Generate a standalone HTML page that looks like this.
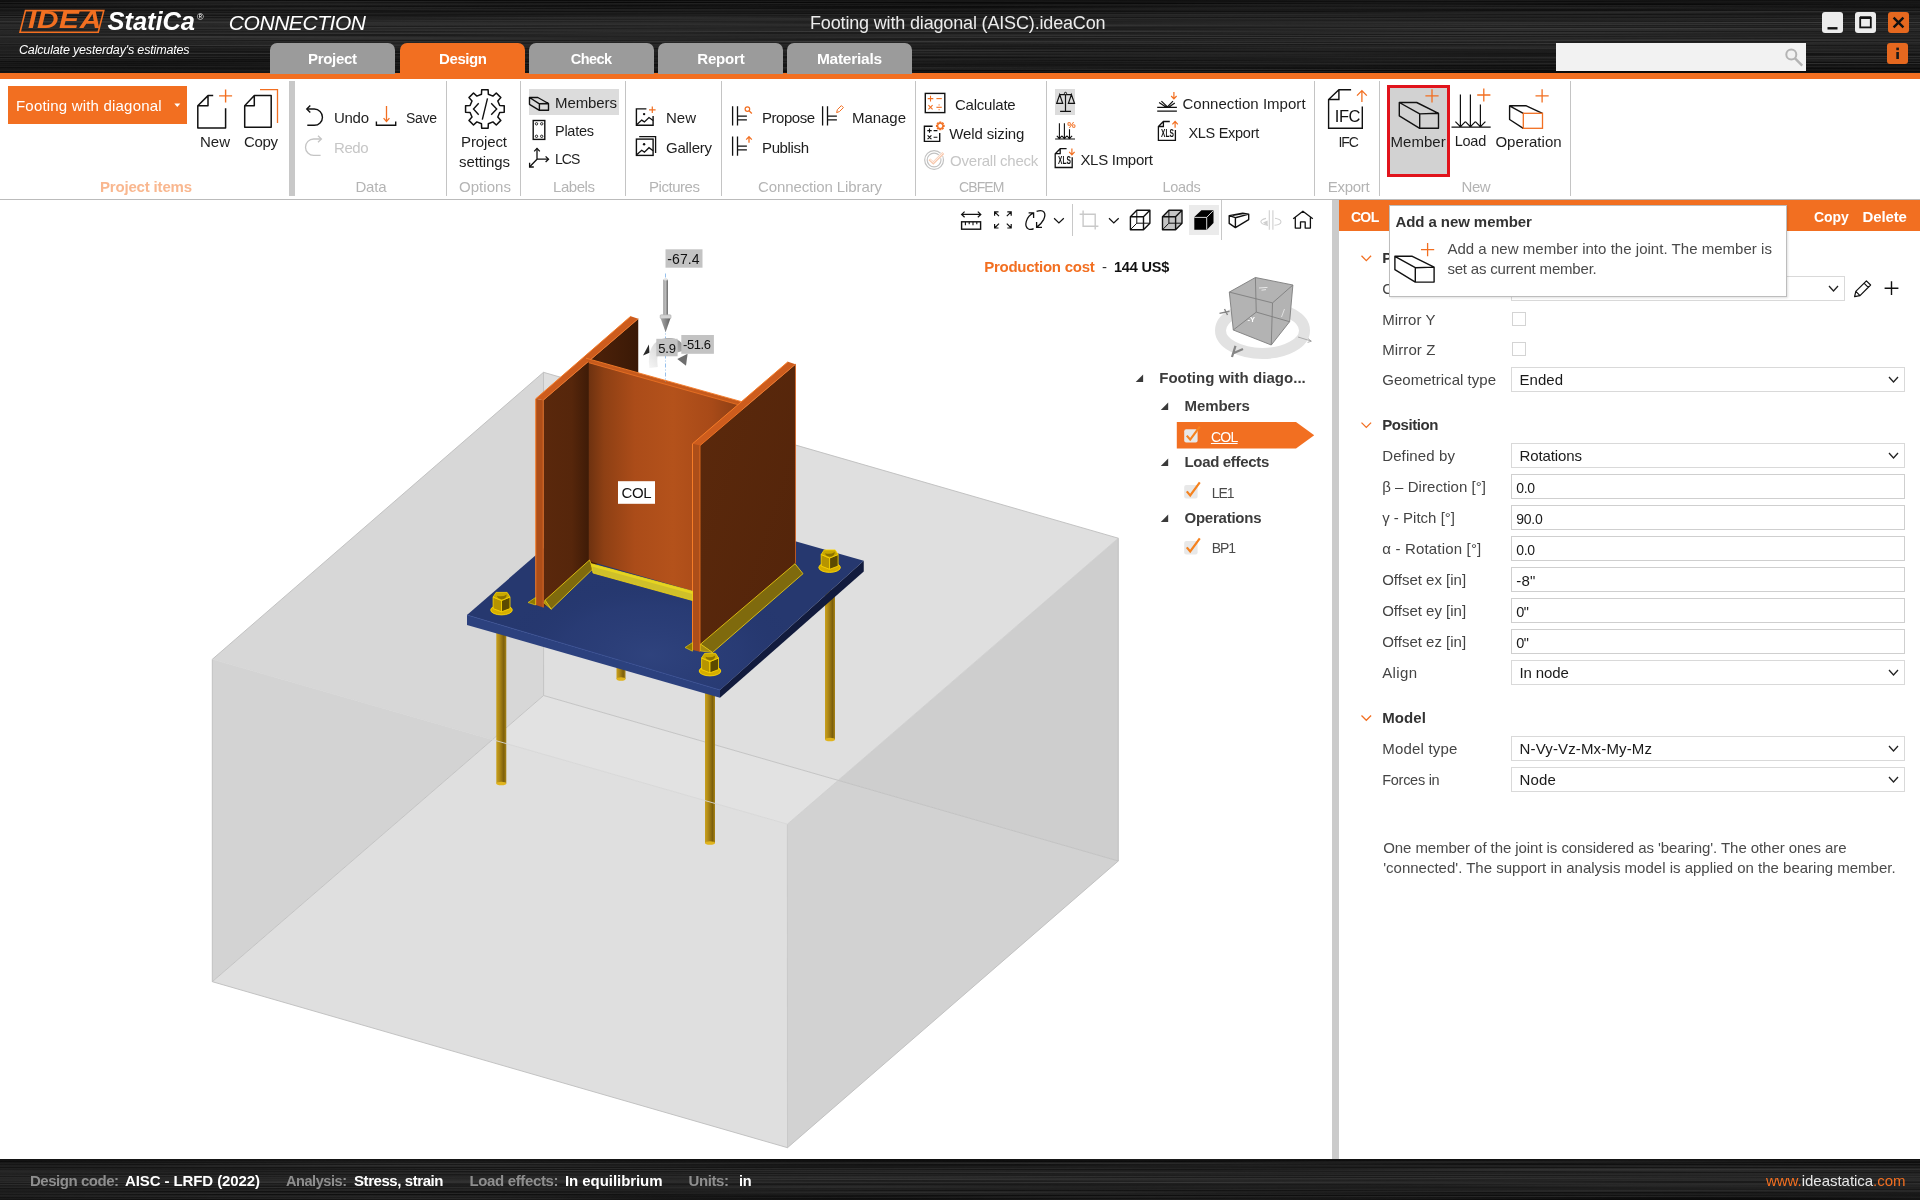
<!DOCTYPE html>
<html><head><meta charset="utf-8"><title>IDEA StatiCa Connection</title>
<style>
html,body{margin:0;padding:0;width:1920px;height:1200px;overflow:hidden;background:#fff;}
body{position:relative;font-family:"Liberation Sans",sans-serif;}
.t{position:absolute;white-space:nowrap;line-height:1;font-family:"Liberation Sans",sans-serif;}
.r{position:absolute;box-sizing:border-box;}
svg{position:absolute;left:0;top:0;}
</style></head><body>
<svg width="1920" height="1200" viewBox="0 0 1920 1200">
<defs>
<filter id="brush" x="0" y="0" width="100%" height="100%" color-interpolation-filters="sRGB">
<feTurbulence type="fractalNoise" baseFrequency="0.0015 0.85" numOctaves="2" seed="7" result="n"/>
<feColorMatrix in="n" type="matrix" values="0 0 0 0 0  0 0 0 0 0  0 0 0 0 0  1.6 0 0 0 -0.52" result="a"/>
<feFlood flood-color="#ffffff"/><feComposite in2="a" operator="in"/>
</filter>
<linearGradient id="hg" x1="0" y1="0" x2="0" y2="1">
<stop offset="0" stop-color="#070707"/><stop offset="0.12" stop-color="#0e0e0e"/><stop offset="0.32" stop-color="#1e1e1e"/><stop offset="0.58" stop-color="#1a1a1a"/><stop offset="0.82" stop-color="#101010"/><stop offset="1" stop-color="#090909"/>
</linearGradient>
<linearGradient id="sg" x1="0" y1="0" x2="0" y2="1">
<stop offset="0" stop-color="#080808"/><stop offset="0.2" stop-color="#141414"/><stop offset="0.5" stop-color="#1d1d1d"/><stop offset="0.8" stop-color="#121212"/><stop offset="1" stop-color="#0a0a0a"/>
</linearGradient>
</defs>
<rect x="0" y="0" width="1920" height="74" fill="url(#hg)"/>
<rect x="0" y="0" width="1920" height="74" filter="url(#brush)" opacity="0.17"/>
<rect x="0" y="1159" width="1920" height="41" fill="url(#sg)"/>
<rect x="0" y="1159" width="1920" height="41" filter="url(#brush)" opacity="0.16"/>
</svg>
<div class="r" style="left:0px;top:73px;width:1920px;height:6px;background:#f26f21;"></div><div class="r" style="left:0px;top:79px;width:1920px;height:120px;background:#ffffff;"></div><div class="r" style="left:0px;top:199px;width:1920px;height:1px;background:#bbbbbb;"></div><div class="r" style="left:270px;top:43px;width:125px;height:31px;background:#9b9b9b;border-radius:7px 7px 0 0;"></div><div class="r" style="left:400px;top:43px;width:125px;height:31px;background:#f26f21;border-radius:7px 7px 0 0;"></div><div class="r" style="left:529px;top:43px;width:125px;height:31px;background:#9b9b9b;border-radius:7px 7px 0 0;"></div><div class="r" style="left:658px;top:43px;width:125px;height:31px;background:#9b9b9b;border-radius:7px 7px 0 0;"></div><div class="r" style="left:787px;top:43px;width:125px;height:31px;background:#9b9b9b;border-radius:7px 7px 0 0;"></div><div class="r" style="left:1556px;top:43px;width:250px;height:28px;background:#f2f2f2;"></div><div class="r" style="left:1822px;top:12px;width:21px;height:21px;background:#ececec;border-radius:3px;"></div><div class="r" style="left:1855px;top:12px;width:21px;height:21px;background:#ececec;border-radius:3px;"></div><div class="r" style="left:1888px;top:12px;width:21px;height:21px;background:#e5681f;border-radius:3px;"></div><div class="r" style="left:1887px;top:43px;width:21px;height:21px;background:#e5681f;border-radius:3px;"></div><div class="r" style="left:8px;top:86px;width:179px;height:38px;background:#f26f21;"></div><div class="r" style="left:289px;top:81px;width:6px;height:115px;background:#c8c8c8;"></div><div class="r" style="left:446px;top:81px;width:1px;height:115px;background:#c4c4c4;"></div><div class="r" style="left:520px;top:81px;width:1px;height:115px;background:#c4c4c4;"></div><div class="r" style="left:625px;top:81px;width:1px;height:115px;background:#c4c4c4;"></div><div class="r" style="left:721px;top:81px;width:1px;height:115px;background:#c4c4c4;"></div><div class="r" style="left:915px;top:81px;width:1px;height:115px;background:#c4c4c4;"></div><div class="r" style="left:1046px;top:81px;width:1px;height:115px;background:#c4c4c4;"></div><div class="r" style="left:1314px;top:81px;width:1px;height:115px;background:#c4c4c4;"></div><div class="r" style="left:1379px;top:81px;width:1px;height:115px;background:#c4c4c4;"></div><div class="r" style="left:1570px;top:81px;width:1px;height:115px;background:#c4c4c4;"></div><div class="r" style="left:529px;top:89px;width:90px;height:26px;background:#dcdcdc;"></div><div class="r" style="left:1055px;top:89px;width:20px;height:26px;background:#dcdcdc;"></div><div class="r" style="left:1387px;top:85px;width:63px;height:92px;background:#d2d2d2;border:3px solid #e1141c;"></div><div class="r" style="left:1332px;top:200px;width:7px;height:959px;background:#cbcbcb;"></div><div class="r" style="left:1339px;top:200px;width:581px;height:31px;background:#f26f21;"></div><div class="r" style="left:1189px;top:205px;width:30px;height:30px;background:#ebebeb;"></div><div class="r" style="left:1072px;top:204px;width:1px;height:32px;background:#c8c8c8;"></div><div class="r" style="left:1221px;top:200px;width:1px;height:40px;background:#c8c8c8;"></div><div class="r" style="left:1511px;top:276px;width:334px;height:25px;background:#ffffff;border:1px solid #d9d9d9;"></div><div class="r" style="left:1511.5px;top:312px;width:14px;height:14px;background:#ffffff;border:1px solid #d4d4d4;"></div><div class="r" style="left:1511.5px;top:342px;width:14px;height:14px;background:#ffffff;border:1px solid #d4d4d4;"></div><div class="r" style="left:1511px;top:367px;width:394px;height:25px;background:#ffffff;border:1px solid #d9d9d9;"></div><div class="r" style="left:1511px;top:443px;width:394px;height:25px;background:#ffffff;border:1px solid #d9d9d9;"></div><div class="r" style="left:1511px;top:474px;width:394px;height:25px;background:#ffffff;border:1px solid #cfcfcf;"></div><div class="r" style="left:1511px;top:505px;width:394px;height:25px;background:#ffffff;border:1px solid #cfcfcf;"></div><div class="r" style="left:1511px;top:536px;width:394px;height:25px;background:#ffffff;border:1px solid #cfcfcf;"></div><div class="r" style="left:1511px;top:567px;width:394px;height:25px;background:#ffffff;border:1px solid #cfcfcf;"></div><div class="r" style="left:1511px;top:598px;width:394px;height:25px;background:#ffffff;border:1px solid #cfcfcf;"></div><div class="r" style="left:1511px;top:629px;width:394px;height:25px;background:#ffffff;border:1px solid #cfcfcf;"></div><div class="r" style="left:1511px;top:660px;width:394px;height:25px;background:#ffffff;border:1px solid #d9d9d9;"></div><div class="r" style="left:1511px;top:736px;width:394px;height:25px;background:#ffffff;border:1px solid #d9d9d9;"></div><div class="r" style="left:1511px;top:767px;width:394px;height:25px;background:#ffffff;border:1px solid #d9d9d9;"></div>
<svg width="1920" height="1200" viewBox="0 0 1920 1200">
<defs>
<linearGradient id="webg" x1="0" y1="0" x2="1" y2="0">
<stop offset="0" stop-color="#6e3210"/><stop offset="0.10" stop-color="#8e4014"/><stop offset="0.30" stop-color="#ab4c19"/><stop offset="0.55" stop-color="#b4521b"/><stop offset="0.80" stop-color="#a84a18"/><stop offset="1" stop-color="#8a3e14"/>
</linearGradient>
<linearGradient id="lfg" x1="0" y1="0" x2="1" y2="0">
<stop offset="0" stop-color="#5a280c"/><stop offset="0.30" stop-color="#56260b"/><stop offset="0.48" stop-color="#3e1b07"/><stop offset="0.6" stop-color="#4a2009"/><stop offset="1" stop-color="#3a1906"/>
</linearGradient>
<linearGradient id="rfg" x1="0" y1="0" x2="1" y2="1">
<stop offset="0" stop-color="#5b290c"/><stop offset="1" stop-color="#53240a"/>
</linearGradient>
<linearGradient id="ancg" x1="0" y1="0" x2="1" y2="0">
<stop offset="0" stop-color="#c9a01c"/><stop offset="0.3" stop-color="#b08a16"/><stop offset="0.75" stop-color="#7d600c"/><stop offset="1" stop-color="#a88414"/>
</linearGradient>
<linearGradient id="plg" x1="0" y1="0" x2="1" y2="1">
<stop offset="0" stop-color="#21326a"/><stop offset="0.45" stop-color="#283a74"/><stop offset="0.75" stop-color="#2c3f7a"/><stop offset="1" stop-color="#26386e"/>
</linearGradient>
<linearGradient id="arg" x1="0" y1="0" x2="1" y2="0">
<stop offset="0" stop-color="#8c8c8c"/><stop offset="0.4" stop-color="#c4c4c4"/><stop offset="1" stop-color="#6a6a6a"/>
</linearGradient>
<linearGradient id="arg2" x1="0" y1="0" x2="1" y2="0">
<stop offset="0" stop-color="#a8a8a8"/><stop offset="0.45" stop-color="#8a8a8a"/><stop offset="1" stop-color="#5e5e5e"/>
</linearGradient>
<radialGradient id="plr" cx="650" cy="655" r="150" gradientUnits="userSpaceOnUse" gradientTransform="translate(650 655) scale(1 0.55) translate(-650 -655)">
<stop offset="0" stop-color="#30447f" stop-opacity="0.9"/><stop offset="0.6" stop-color="#2b3e79" stop-opacity="0.5"/><stop offset="1" stop-color="#22346a" stop-opacity="0"/>
</radialGradient>
<linearGradient id="marc" x1="650" y1="368" x2="682" y2="342" gradientUnits="userSpaceOnUse">
<stop offset="0" stop-color="#f4f4f4"/><stop offset="0.45" stop-color="#dcdcdc"/><stop offset="1" stop-color="#8e8e8e"/>
</linearGradient>
</defs>
<path d="M1361.5 255.8 L1366.3 260.6 L1371.1 255.8" fill="none" stroke="#f26f21" stroke-width="1.3"/><path d="M1829.0 286.0 L1833.5 291.0 L1838.0 286.0" fill="none" stroke="#222" stroke-width="1.3"/><path d="M1889.0 377.0 L1893.5 382.0 L1898.0 377.0" fill="none" stroke="#222" stroke-width="1.3"/><path d="M1361.5 422.6 L1366.3 427.40000000000003 L1371.1 422.6" fill="none" stroke="#f26f21" stroke-width="1.3"/><path d="M1889.0 453.0 L1893.5 458.0 L1898.0 453.0" fill="none" stroke="#222" stroke-width="1.3"/><path d="M1889.0 670.0 L1893.5 675.0 L1898.0 670.0" fill="none" stroke="#222" stroke-width="1.3"/><path d="M1361.5 715.5 L1366.3 720.3000000000001 L1371.1 715.5" fill="none" stroke="#f26f21" stroke-width="1.3"/><path d="M1889.0 746.0 L1893.5 751.0 L1898.0 746.0" fill="none" stroke="#222" stroke-width="1.3"/><path d="M1889.0 777.0 L1893.5 782.0 L1898.0 777.0" fill="none" stroke="#222" stroke-width="1.3"/><polygon points="212.30,659.30 543.50,372.30 543.60,695.50 492.50,739.64" fill="#d7d7d7" /><polygon points="543.50,372.30 1118.30,538.20 838.16,780.33 543.60,695.50" fill="#dfdfdf" /><polygon points="543.60,695.50 838.16,780.33 787.40,824.20 492.50,739.64" fill="#e2e2e2" /><polygon points="212.30,659.30 492.50,739.64 212.30,981.70" fill="#d3d3d3" /><polygon points="492.50,739.64 787.40,824.20 787.50,1147.70 212.30,981.70" fill="#dfdfdf" /><polygon points="787.40,824.20 838.16,780.33 1118.30,861.00 787.50,1147.70" fill="#d2d2d2" /><polygon points="838.16,780.33 1118.30,538.20 1118.30,861.00" fill="#cecece" /><line x1="543.50" y1="372.30" x2="543.60" y2="695.50" stroke="#c0c0c0" stroke-width="0.9" /><line x1="212.30" y1="981.70" x2="543.60" y2="695.50" stroke="#c0c0c0" stroke-width="0.9" /><line x1="543.60" y1="695.50" x2="1118.30" y2="861.00" stroke="#c0c0c0" stroke-width="0.9" /><line x1="787.40" y1="824.20" x2="787.50" y2="1147.70" stroke="#c6c6c6" stroke-width="0.9" /><line x1="787.40" y1="824.20" x2="1118.30" y2="538.20" stroke="#cacaca" stroke-width="0.7" /><line x1="212.30" y1="659.30" x2="543.50" y2="372.30" stroke="#bdbdbd" stroke-width="0.9" /><line x1="543.50" y1="372.30" x2="1118.30" y2="538.20" stroke="#bdbdbd" stroke-width="0.9" /><line x1="1118.30" y1="538.20" x2="1118.30" y2="861.00" stroke="#bdbdbd" stroke-width="0.9" /><line x1="1118.30" y1="861.00" x2="787.50" y2="1147.70" stroke="#bdbdbd" stroke-width="0.9" /><line x1="787.50" y1="1147.70" x2="212.30" y2="981.70" stroke="#bdbdbd" stroke-width="0.9" /><line x1="212.30" y1="981.70" x2="212.30" y2="659.30" stroke="#bdbdbd" stroke-width="0.9" /><rect x="616.5" y="660" width="9.0" height="19" fill="url(#ancg)"/><ellipse cx="621.0" cy="679" rx="4.5" ry="1.8" fill="#e0b41e"/><rect x="496.3" y="628" width="10.0" height="155.5" fill="url(#ancg)"/><ellipse cx="501.3" cy="783.5" rx="5.0" ry="1.8" fill="#e0b41e"/><rect x="825" y="590" width="10" height="149.5" fill="url(#ancg)"/><ellipse cx="830.0" cy="739.5" rx="5.0" ry="1.8" fill="#e0b41e"/><rect x="705" y="690" width="10" height="153" fill="url(#ancg)"/><ellipse cx="710.0" cy="843" rx="5.0" ry="1.8" fill="#e0b41e"/><line x1="212.30" y1="659.30" x2="787.40" y2="824.20" stroke="#d6d6d6" stroke-width="0.9" /><polygon points="467.00,615.00 720.00,690.00 720.00,697.80 467.00,625.00" fill="#2c417e" /><polygon points="720.00,690.00 863.75,560.75 863.75,571.50 720.00,697.80" fill="#121b3d" /><polygon points="467.00,615.00 612.00,489.00 863.75,560.75 720.00,690.00" fill="#26386f" /><polygon points="467.00,615.00 612.00,489.00 863.75,560.75 720.00,690.00" fill="url(#plr)" /><line x1="467.00" y1="615.00" x2="720.00" y2="690.00" stroke="#3a5196" stroke-width="0.8" /><polygon points="543.25,400.20 638.25,318.75 638.25,530.00 543.25,607.50" fill="url(#lfg)" /><polygon points="535.75,398.75 543.25,400.20 543.25,607.50 535.75,605.00" fill="#ad4e19" /><line x1="543.25" y1="400.20" x2="543.25" y2="607.50" stroke="#f07424" stroke-width="0.8" /><polygon points="535.75,398.75 630.75,316.25 638.25,318.75 543.25,400.20" fill="#cd5c1d" /><line x1="535.75" y1="398.75" x2="630.75" y2="316.25" stroke="#f57c28" stroke-width="1" /><line x1="535.75" y1="398.75" x2="535.75" y2="605.00" stroke="#f57c28" stroke-width="1" /><line x1="543.25" y1="400.20" x2="638.25" y2="318.75" stroke="#f07626" stroke-width="0.9" /><polygon points="588.75,361.25 742.00,404.40 742.00,605.00 588.75,561.00" fill="url(#webg)" /><polygon points="586.00,358.20 745.30,402.70 741.20,405.60 588.75,362.70" fill="#c65a1c" /><line x1="586.00" y1="358.20" x2="745.30" y2="402.70" stroke="#f57c28" stroke-width="0.9" /><line x1="588.75" y1="362.70" x2="741.20" y2="405.60" stroke="#ee7424" stroke-width="0.8" /><polygon points="700.00,445.60 795.50,364.25 795.50,563.50 700.00,651.75" fill="url(#rfg)" /><polygon points="692.50,443.75 700.00,445.60 700.00,651.75 692.50,650.00" fill="#ad4e19" /><polygon points="692.50,443.75 788.00,361.75 795.50,364.25 700.00,445.60" fill="#cd5c1d" /><line x1="692.50" y1="443.75" x2="788.00" y2="361.75" stroke="#f57c28" stroke-width="1" /><line x1="692.50" y1="443.75" x2="692.50" y2="650.00" stroke="#f57c28" stroke-width="1" /><line x1="700.00" y1="445.60" x2="795.50" y2="364.25" stroke="#f07626" stroke-width="0.9" /><line x1="795.50" y1="364.25" x2="795.50" y2="563.50" stroke="#d8621f" stroke-width="0.8" /><line x1="700.00" y1="445.60" x2="700.00" y2="651.75" stroke="#f07424" stroke-width="0.8" /><polygon points="545.00,600.20 589.50,560.00 593.00,568.80 551.20,609.20" fill="#7f6a0d" stroke="#f2d312" stroke-width="0.8"/><polygon points="544.00,603.00 545.00,600.20 551.20,609.20" fill="#a88c10" stroke="#f2d312" stroke-width="0.6"/><polygon points="528.00,602.50 535.50,597.50 535.50,605.00" fill="#8f7a00" stroke="#f2d312" stroke-width="0.6"/><polygon points="591.20,563.70 692.50,591.20 692.50,600.50 593.00,573.00" fill="#cfc02a" stroke="#f2d312" stroke-width="0.8"/><polygon points="591.20,563.70 692.50,591.20 692.50,594.00 591.80,566.50" fill="#e6d420" /><polygon points="700.50,644.20 795.00,563.75 803.00,573.70 712.50,652.50" fill="#7f6a0d" stroke="#f2d312" stroke-width="0.8"/><polygon points="700.50,651.00 700.50,644.20 712.50,652.50" fill="#a88c10" stroke="#f2d312" stroke-width="0.6"/><polygon points="685.00,647.50 692.50,642.50 692.50,651.20" fill="#8f7a00" stroke="#f2d312" stroke-width="0.6"/><ellipse cx="501.5" cy="610" rx="10.8" ry="4.9" fill="#d6ae00" stroke="#ffd800" stroke-width="0.9"/><polygon points="493.1,597 501.5,600.5 501.5,611.8 493.1,608.6" fill="#b69400" stroke="#ffd800" stroke-width="0.8" stroke-linejoin="round"/><polygon points="501.5,600.5 510.0,597 510.0,608.6 501.5,611.8" fill="#5c4a00" stroke="#ffd800" stroke-width="0.8" stroke-linejoin="round"/><polygon points="493.1,597 496.1,592.4 507.1,592.4 510.0,597 501.5,600.5" fill="#c9a800" stroke="#ffd800" stroke-width="0.8" stroke-linejoin="round"/><path d="M496.9 595.8 Q502.5 597.4 506.7 594.4 Q506.5 599 501.5 599.2 Q497.9 599 496.9 595.8Z" fill="#8c7200"/><ellipse cx="710" cy="671" rx="10.8" ry="4.9" fill="#d6ae00" stroke="#ffd800" stroke-width="0.9"/><polygon points="701.6,658 710,661.5 710,672.8 701.6,669.6" fill="#b69400" stroke="#ffd800" stroke-width="0.8" stroke-linejoin="round"/><polygon points="710,661.5 718.5,658 718.5,669.6 710,672.8" fill="#5c4a00" stroke="#ffd800" stroke-width="0.8" stroke-linejoin="round"/><polygon points="701.6,658 704.6,653.4 715.6,653.4 718.5,658 710,661.5" fill="#c9a800" stroke="#ffd800" stroke-width="0.8" stroke-linejoin="round"/><path d="M705.4 656.8 Q711 658.4 715.2 655.4 Q715 660 710 660.2 Q706.4 660 705.4 656.8Z" fill="#8c7200"/><ellipse cx="829.6" cy="567.5" rx="10.8" ry="4.9" fill="#d6ae00" stroke="#ffd800" stroke-width="0.9"/><polygon points="821.2,554.5 829.6,558.0 829.6,569.3 821.2,566.1" fill="#b69400" stroke="#ffd800" stroke-width="0.8" stroke-linejoin="round"/><polygon points="829.6,558.0 838.1,554.5 838.1,566.1 829.6,569.3" fill="#5c4a00" stroke="#ffd800" stroke-width="0.8" stroke-linejoin="round"/><polygon points="821.2,554.5 824.2,549.9 835.2,549.9 838.1,554.5 829.6,558.0" fill="#c9a800" stroke="#ffd800" stroke-width="0.8" stroke-linejoin="round"/><path d="M825.0 553.3 Q830.6 554.9 834.8000000000001 551.9 Q834.6 556.5 829.6 556.7 Q826.0 556.5 825.0 553.3Z" fill="#8c7200"/><line x1="665.50" y1="273.50" x2="665.50" y2="382.00" stroke="#7ab0e8" stroke-width="0.8" stroke-dasharray="4 2 1 2"/><rect x="663.3" y="278.8" width="4.7" height="38" rx="1.6" fill="url(#arg)"/><ellipse cx="665.65" cy="279.6" rx="2.3" ry="1" fill="#e2e2e2"/><rect x="660.2" y="314.8" width="10.8" height="3.8" rx="1" fill="#d4d4d4" stroke="#a8a8a8" stroke-width="0.6"/><polygon points="660.70,318.60 670.40,318.60 665.60,332.20" fill="url(#arg2)" /><path d="M653.6 367.5 C651.4 352 656 343.4 667 342.2 C674.5 341.6 679.4 345 681.2 351.4" fill="none" stroke="url(#marc)" stroke-width="8.4"/><polygon points="643.00,355.60 648.90,344.60 649.40,352.80" fill="#2a2a2a" /><polygon points="677.30,359.00 687.60,353.80 686.00,365.80" fill="#6e6e6e" /><rect x="665.5" y="249.3" width="37" height="18.4" fill="#c3c3c3"/><rect x="681.3" y="335" width="32.6" height="18.8" fill="#c3c3c3"/><rect x="656.3" y="338.8" width="21.3" height="17.5" fill="#c3c3c3"/><rect x="618" y="481.2" width="37" height="22.6" fill="#ffffff"/><polygon points="25.5,10.6 103.8,10.6 98.2,32.2 20,32.2" fill="none" stroke="#f26f21" stroke-width="1.6"/><path d="M1827.5 28.3H1837.5" fill="none" stroke="#111" stroke-width="2.4" /><rect x="1860.2" y="17.8" width="10.6" height="9.6" fill="none" stroke="#111" stroke-width="1.8"/><path d="M1860 17.6H1871" fill="none" stroke="#111" stroke-width="2.6" /><path d="M1893.6 17.6L1903.4 27.4M1903.4 17.6L1893.6 27.4" fill="none" stroke="#111" stroke-width="2.4" /><rect x="1896.3" y="52" width="2.6" height="7" fill="#1a1a1a"/><rect x="1896.3" y="47.6" width="2.6" height="2.6" fill="#1a1a1a"/><circle cx="1791.3" cy="54.5" r="5" fill="none" stroke="#b4b4b4" stroke-width="2"/><path d="M1794.8 58.2L1802.2 65.6" fill="none" stroke="#b4b4b4" stroke-width="2.4" /><polygon points="174.3,103.6 180.3,103.6 177.3,107" fill="#ffffff"/><path d="M213.2 95.6H208L197.8 105.7V128.1H225.6V108.3M208 95.6V105.7H197.8" fill="none" stroke="#111111" stroke-width="1.5" stroke-linejoin="round"/><path d="M219.1 95.9H232.1M225.6 89.4V102.4" fill="none" stroke="#f26f21" stroke-width="1.4" /><path d="M254.3 95.6H271.2V127.3H244.7V105.7ZM254.3 95.6V105.7H244.7" fill="none" stroke="#111111" stroke-width="1.5" stroke-linejoin="round"/><path d="M260 89.6H277.5V122.9" fill="none" stroke="#f26f21" stroke-width="1.3" /><path d="M307 109H314.3A8.15 8.15 0 0 1 314.3 125.3H307.3" fill="none" stroke="#111111" stroke-width="1.4" /><path d="M310.3 105.6L306.8 109L310.3 112.4" fill="none" stroke="#111111" stroke-width="1.4" /><path d="M386.5 106V121.5M383.6 118.2L386.5 121.6L389.4 118.2" fill="none" stroke="#f26f21" stroke-width="1.3" /><path d="M376.4 121.5V125.3H395.7V121.5" fill="none" stroke="#111111" stroke-width="1.4" /><path d="M321 139H313.7A8.2 8.2 0 0 0 313.7 155.4H320.6" fill="none" stroke="#c4c4c4" stroke-width="1.3" /><path d="M318 135.7L321.4 139L318 142.3" fill="none" stroke="#c4c4c4" stroke-width="1.3" /><path d="M481.47 94.19 L481.68 89.67 L488.12 89.67 L488.33 94.19 L492.94 96.10 L496.30 93.05 L500.85 97.60 L497.80 100.96 L499.71 105.57 L504.23 105.78 L504.23 112.22 L499.71 112.43 L497.80 117.04 L500.85 120.40 L496.30 124.95 L492.94 121.90 L488.33 123.81 L488.12 128.33 L481.68 128.33 L481.47 123.81 L476.86 121.90 L473.50 124.95 L468.95 120.40 L472.00 117.04 L470.09 112.43 L465.57 112.22 L465.57 105.78 L470.09 105.57 L472.00 100.96 L468.95 97.60 L473.50 93.05 L476.86 96.10Z" fill="none" stroke="#111111" stroke-width="1.5" stroke-linejoin="round"/><path d="M478.7 103.2L473.5 109L478.7 114.7M487.5 98.3L482.3 119.6M491.2 103.2L496.7 109L491.2 114.7" fill="none" stroke="#111111" stroke-width="1.4" /><path d="M529.50 97.50L537.80 97.50L548.50 103.50L548.50 110.30L539.40 110.30L529.50 104.30ZM529.50 97.50L539.40 103.80L548.50 103.50M539.40 103.80L539.40 110.30" fill="none" stroke="#111111" stroke-width="1.4" stroke-linejoin="round"/><rect x="533.2" y="120.5" width="11.6" height="18.9" fill="none" stroke="#111111" stroke-width="1.4"/><circle cx="536.5" cy="123.8" r="1.2" fill="none" stroke="#111111" stroke-width="0.9"/><circle cx="541.7" cy="123.8" r="1.2" fill="none" stroke="#111111" stroke-width="0.9"/><circle cx="536.5" cy="136.3" r="1.2" fill="none" stroke="#111111" stroke-width="0.9"/><circle cx="541.7" cy="136.3" r="1.2" fill="none" stroke="#111111" stroke-width="0.9"/><path d="M537 148.6V159.2H548.3M537 159.2L529.7 166.8" fill="none" stroke="#111111" stroke-width="1.3" /><path d="M534.2 151.4L537 148.4L539.8 151.4M545.6 156.4L548.5 159.2L545.6 162M529.6 162.8V167H533.8" fill="none" stroke="#111111" stroke-width="1.3" /><path d="M646.4 108.9H636.4V125.2H653.1V115.9" fill="none" stroke="#111111" stroke-width="1.4" /><path d="M636.4 124.9L641.6999999999999 120.10000000000001L644.4 121.9L649.0 117.5L653.1 120.5" fill="none" stroke="#111111" stroke-width="1.3" /><circle cx="644.1" cy="114.10000000000001" r="1.2" fill="#111111"/><path d="M649.0 109.8H655.5999999999999M652.3 106.5V113.1" fill="none" stroke="#f26f21" stroke-width="1.2" /><rect x="636.4" y="139.1" width="16.7" height="16.3" fill="none" stroke="#111111" stroke-width="1.4"/><path d="M636.4 155.1L641.6999999999999 150.29999999999998L644.4 152.1L649.0 147.7L653.1 150.7" fill="none" stroke="#111111" stroke-width="1.3" /><circle cx="644.1" cy="144.29999999999998" r="1.2" fill="#111111"/><path d="M639.2 136.6H655.6V153" fill="none" stroke="#111111" stroke-width="1.3" /><path d="M732.6 106.3V125.6M737.5 106.3V125.6M737.5 116.1H746.9M737.5 119.8H746.9" fill="none" stroke="#111111" stroke-width="1.3" /><circle cx="747.4" cy="109.1" r="2.3" fill="none" stroke="#f26f21" stroke-width="1.2"/><path d="M749 110.8L751.9 113.4" fill="none" stroke="#f26f21" stroke-width="1.3" /><path d="M822.6 106.3V125.6M827.5 106.3V125.6M827.5 116.1H836.9M827.5 119.8H836.9" fill="none" stroke="#111111" stroke-width="1.3" /><path d="M836.6 112.6L837.4 109.6L841.4 105.6L843.4 107.6L839.4 111.6Z" fill="none" stroke="#f26f21" stroke-width="1.0" /><path d="M732.6 136.4V155.70000000000002M737.5 136.4V155.70000000000002M737.5 146.20000000000002H746.9M737.5 149.9H746.9" fill="none" stroke="#111111" stroke-width="1.3" /><path d="M749 142.8V136.8M746.2 139.6L749 136.6L751.8 139.6" fill="none" stroke="#f26f21" stroke-width="1.3" /><rect x="925.3" y="93.4" width="19.5" height="19.2" fill="none" stroke="#111111" stroke-width="1.4"/><path d="M927.7 98.6H933.3M930.5 95.8V101.39999999999999" fill="none" stroke="#f26f21" stroke-width="1.1" /><path d="M936.4 98.6H941.8" fill="none" stroke="#f26f21" stroke-width="1.1" /><path d="M928.4 105.2L932.6 109.4M932.6 105.2L928.4 109.4" fill="none" stroke="#f26f21" stroke-width="1.1" /><path d="M936.4 107.3H941.8" fill="none" stroke="#f26f21" stroke-width="1.1" /><circle cx="939.1" cy="104.9" r="0.6" fill="#f26f21"/><circle cx="939.1" cy="109.7" r="0.6" fill="#f26f21"/><path d="M932.6 126.2H924.4V141.4H939.7V133" fill="none" stroke="#111111" stroke-width="1.4" /><path d="M927.3 130.6H931.7M929.5 128.4V132.8M933.6 130.6H937.4M927.6 135.3L931.4 139.1M931.4 135.3L927.6 139.1M933.6 137.2H937.4" fill="none" stroke="#111111" stroke-width="1.1" /><path d="M939.76 123.56 L939.66 122.05 L940.94 122.05 L940.84 123.56 L941.57 123.86 L942.57 122.73 L943.47 123.63 L942.34 124.63 L942.64 125.36 L944.15 125.26 L944.15 126.54 L942.64 126.44 L942.34 127.17 L943.47 128.17 L942.57 129.07 L941.57 127.94 L940.84 128.24 L940.94 129.75 L939.66 129.75 L939.76 128.24 L939.03 127.94 L938.03 129.07 L937.13 128.17 L938.26 127.17 L937.96 126.44 L936.45 126.54 L936.45 125.26 L937.96 125.36 L938.26 124.63 L937.13 123.63 L938.03 122.73 L939.03 123.86Z" fill="none" stroke="#f26f21" stroke-width="1.1" stroke-linejoin="round"/><circle cx="934.1" cy="160" r="9.4" fill="none" stroke="#c2c2c2" stroke-width="1.2"/><circle cx="934.1" cy="160" r="6.9" fill="none" stroke="#c2c2c2" stroke-width="1.2"/><path d="M929.4 159.4L933.3 163L943.3 153" fill="none" stroke="#ffffff" stroke-width="3.2" /><path d="M929.4 159.4L933.3 163L943.3 153" fill="none" stroke="#f8c8ad" stroke-width="2.6" /><path d="M929.9 159.4L933.3 162.4L942.8 153" fill="none" stroke="#ffffff" stroke-width="0.9" /><path d="M1065.5 92.6V111.4M1060.1 111.4H1071M1059.7 94.6H1071.4M1059.7 94.6L1056.7 103.4H1062.7ZM1071.4 94.6L1068.4 103.4H1074.5Z" fill="none" stroke="#111111" stroke-width="1.2" /><circle cx="1065.5" cy="93.4" r="1.1" fill="#dcdcdc" stroke="#111111" stroke-width="0.9"/><path d="M1059.4 123.2V138.4M1056.8000000000002 135.8L1059.4 138.4L1062.0 135.8M1064.4 123.2V138.4M1061.8000000000002 135.8L1064.4 138.4L1067.0 135.8M1069.5 129.2V138.4M1066.9 135.8L1069.5 138.4L1072.1 135.8M1055.1 139.0H1075" fill="none" stroke="#111111" stroke-width="1.1" /><path d="M1066.6000000000001 148.7H1060.2L1055.2 153.7V167.5H1072.2V157.2M1060.2 148.7V153.7H1055.2" fill="none" stroke="#111111" stroke-width="1.3" /><path d="M1071.9 148.6V154.7M1069.2 151.89999999999998L1071.9 154.79999999999998L1074.6000000000001 151.89999999999998" fill="none" stroke="#f26f21" stroke-width="1.2" /><path d="M1169.8000000000002 121.5H1163.4L1158.4 126.5V140.3H1175.4V130.0M1163.4 121.5V126.5H1158.4" fill="none" stroke="#111111" stroke-width="1.3" /><path d="M1175.1000000000001 127.8V121.5M1172.4 124.3L1175.1000000000001 121.4L1177.8000000000002 124.3" fill="none" stroke="#f26f21" stroke-width="1.2" /><path d="M1157.2 107.3H1176.9M1157.2 111.2H1176.9M1159.1 102.6L1165.9 107.1M1161.4 101.1L1167.4 106.9M1173 101.1L1167.4 106.9M1174.8 103L1169 107.1" fill="none" stroke="#111111" stroke-width="1.2" /><path d="M1173.9 92.1V98.7M1171.2 96L1173.9 98.9L1176.6 96" fill="none" stroke="#f26f21" stroke-width="1.2" /><path d="M1351.1 89.7H1338.9L1328.6 99.5V128.2H1362.3V106.6M1338.9 89.7V99.5H1328.6" fill="none" stroke="#111111" stroke-width="1.4" /><path d="M1361.9 102.1V90.8M1357 95.6L1361.9 90.6L1366.8 95.6" fill="none" stroke="#f26f21" stroke-width="1.3" /><path d="M1399.3 102.5H1416.7L1438.5 113.3V128.3H1419.7L1399.3 115.9ZM1399.3 102.5L1419.7 113.9L1438.5 113.3M1419.7 113.9V128.3" fill="none" stroke="#111111" stroke-width="1.4" stroke-linejoin="round"/><path d="M1425.4 95.8H1438.6M1432 89.2V102.39999999999999" fill="none" stroke="#f26f21" stroke-width="1.3" /><path d="M1460.4 94.4V126.6M1455.4 121.6L1460.4 126.6L1465.4 121.6M1470.4 94.4V126.6M1465.4 121.6L1470.4 126.6L1475.4 121.6M1480.4 104.6V126.6M1475.4 121.6L1480.4 126.6L1485.4 121.6M1451.5 127.19999999999999H1490.7" fill="none" stroke="#111111" stroke-width="1.2" /><path d="M1477.2 95H1490.3999999999999M1483.8 88.4V101.6" fill="none" stroke="#f26f21" stroke-width="1.3" /><path d="M1523.3 113.3L1509.6 105.8H1526.3L1542.5 113.3M1509.6 105.8V119.5L1523.3 128.3" fill="none" stroke="#111111" stroke-width="1.4" stroke-linejoin="round"/><rect x="1523.3" y="113.3" width="19.2" height="15" fill="none" stroke="#f26f21" stroke-width="1.3"/><path d="M1535.5 95.8H1548.6999999999998M1542.1 89.2V102.39999999999999" fill="none" stroke="#f26f21" stroke-width="1.3" /><path d="M961.6 214.4H980.8M964.6 211.6L961.6 214.4L964.6 217.2M977.8 211.6L980.8 214.4L977.8 217.2" fill="none" stroke="#111111" stroke-width="1.2" /><rect x="961.6" y="221.8" width="19" height="7.4" fill="none" stroke="#111111" stroke-width="1.4"/><path d="M965.4 222V225.3M969.2 222V224.3M973 222V225.3M976.8 222V224.3" fill="none" stroke="#111111" stroke-width="1.1" /><path d="M999 216.2L994.6 211.8M998.5 211.8H994.6V215.70000000000002" fill="none" stroke="#111111" stroke-width="1.2" /><path d="M1006.8 216.2L1011.2 211.8M1007.3000000000001 211.8H1011.2V215.70000000000002" fill="none" stroke="#111111" stroke-width="1.2" /><path d="M999 223.6L994.6 228M998.5 228H994.6V224.1" fill="none" stroke="#111111" stroke-width="1.2" /><path d="M1006.8 223.6L1011.2 228M1007.3000000000001 228H1011.2V224.1" fill="none" stroke="#111111" stroke-width="1.2" /><path d="M1033.4 213.2C1026 216.5 1023.5 226.5 1028.5 229C1030.5 229.8 1032.3 229.4 1033.6 228.6M1028.6 212.8H1033.6V218" fill="none" stroke="#111111" stroke-width="1.3" /><path d="M1036.6 211.4C1044 208.6 1046.6 213.6 1043.6 219.6C1041.8 223 1039.4 225.4 1036.6 227.4M1036.6 222V227.4H1042" fill="none" stroke="#111111" stroke-width="1.3" /><path d="M1054.1 218.3L1058.9 223L1063.8 218.3" fill="none" stroke="#111111" stroke-width="1.2" /><path d="M1083.1 210.4V226.2H1098.4M1079.6 214.3H1095.2V229.5" fill="none" stroke="#c9c9c9" stroke-width="1.4" /><path d="M1109 218.3L1113.8 223L1118.7 218.3" fill="none" stroke="#111111" stroke-width="1.2" /><path d="M1130.4 216.7H1143.5V229.7H1130.4ZM1130.4 216.7L1136.8000000000002 210.2H1149.9V223.2L1143.5 229.7M1143.5 216.7L1149.9 210.2" fill="none" stroke="#111111" stroke-width="1.4" stroke-linejoin="round"/><path d="M1136.8000000000002 210.2V223.2H1149.9M1136.8000000000002 223.2L1130.4 229.7" fill="none" stroke="#111111" stroke-width="1.0" /><polygon points="1162.5,216.7 1168.9,210.2 1182.0,210.2 1182.0,223.2 1175.6,229.7 1162.5,229.7" fill="#c4c4c4"/><path d="M1162.5 216.7H1175.6V229.7H1162.5ZM1162.5 216.7L1168.9 210.2H1182.0V223.2L1175.6 229.7M1175.6 216.7L1182.0 210.2" fill="none" stroke="#111111" stroke-width="1.4" stroke-linejoin="round"/><path d="M1168.9 210.2V223.2H1182.0M1168.9 223.2L1162.5 229.7" fill="none" stroke="#111111" stroke-width="1.0" /><polygon points="1194.3,216.9 1201.4,210.2 1213.5,210.2 1213.5,222.9 1206.9,229.7 1194.3,229.7" fill="#000"/><path d="M1194.3 217.4H1206.7V229.7M1206.7 217.4L1213.3 210.6" fill="none" stroke="#ebebeb" stroke-width="0.9" /><path d="M1229.2 215.6L1242.7 213.3L1248.7 214.1V219.6L1235.4 227.6L1229.2 223.4ZM1229.2 215.6L1235.4 217.7L1248.7 214.1M1235.4 217.7V227.6M1233 215.4L1243 213.6" fill="none" stroke="#111111" stroke-width="1.4" stroke-linejoin="round"/><path d="M1269.3 210.2V229.7M1272.9 210.2V229.7" fill="none" stroke="#cfcfcf" stroke-width="1.1" /><path d="M1266 218.4C1258 220 1260 224.6 1268 225.2M1274.5 225.2C1283 224.4 1283 219.6 1275 218.2" fill="none" stroke="#cfcfcf" stroke-width="1.1" /><polygon points="1263,222.6 1267.6,220.6 1267.6,226" fill="#cfcfcf"/><path d="M1293.2 218.75L1302.9 211.25L1312.8 218.75M1295.3 217.6V228.1H1300.5V221.9H1305.2V228.1H1310.4V217.6" fill="none" stroke="#111111" stroke-width="1.3" stroke-linejoin="round"/><ellipse cx="1262.5" cy="330.4" rx="42" ry="23" fill="none" stroke="#e2e2e2" stroke-width="11"/><polygon points="1255.4,277.5 1292.9,285 1289.6,321.7 1271.25,345 1233.3,330 1229.3,292.1" fill="#b3b3b3"/><path d="M1255.4 277.5L1292.9 285L1272.5 302.9L1229.3 292.1ZM1229.3 292.1L1233.3 330L1271.25 345L1272.5 302.9M1271.25 345L1289.6 321.7L1292.9 285M1255.4 277.5L1256.25 312.1L1233.3 330M1256.25 312.1L1289.6 321.7" fill="none" stroke="#7e7e7e" stroke-width="0.9" stroke-linejoin="round"/><path d="M1259 288L1267.5 287.4M1261.5 290.2L1266 289.6" fill="none" stroke="#e8e8e8" stroke-width="1.0" /><path d="M1284.5 309L1281.5 317" fill="none" stroke="#e0e0e0" stroke-width="1.0" /><path d="M1235.5 345.8L1232 357M1243 349L1232.8 353.6" fill="none" stroke="#858585" stroke-width="2.2" /><path d="M1219.5 313.4L1229.5 311.2M1224.5 309L1227.5 315" fill="none" stroke="#858585" stroke-width="1.4" /><path d="M1298 337L1311 341M1308 338.6L1311.4 341.2L1307.6 342.4" fill="none" stroke="#9a9a9a" stroke-width="0.8" /><polygon points="1143.1,374.6 1143.1,382.0 1135.6999999999998,382.0" fill="#3a3a3a"/><polygon points="1168.2,402.6 1168.2,410.0 1160.8,410.0" fill="#3a3a3a"/><polygon points="1168.2,458.6 1168.2,466.0 1160.8,466.0" fill="#3a3a3a"/><polygon points="1168.2,514.6 1168.2,522.0 1160.8,522.0" fill="#3a3a3a"/><polygon points="1176.8,422 1296,422 1314.2,435.3 1296,448.6 1176.8,448.6" fill="#f26f21"/><rect x="1184.2" y="429.2" width="13.4" height="13.4" rx="2" fill="#e8e8e8"/><path d="M1186.8 435.59999999999997L1190.2 439.59999999999997L1199.8 426.59999999999997" fill="none" stroke="#f5821f" stroke-width="2.2" /><rect x="1184.2" y="485" width="13.4" height="13.4" rx="2" fill="#e8e8e8"/><path d="M1186.8 491.4L1190.2 495.4L1199.8 482.4" fill="none" stroke="#f5821f" stroke-width="2.2" /><rect x="1184.2" y="541" width="13.4" height="13.4" rx="2" fill="#e8e8e8"/><path d="M1186.8 547.4L1190.2 551.4L1199.8 538.4" fill="none" stroke="#f5821f" stroke-width="2.2" /><path d="M1854.6 296.6L1855.8 291.4L1866.4 280.8L1870.6 285L1860 295.6ZM1864 283.2L1868.2 287.4M1855.8 291.4L1860 295.6" fill="none" stroke="#111111" stroke-width="1.2" stroke-linejoin="round"/><path d="M1884.6 288.2H1898.4M1891.5 281.3V295.1" fill="none" stroke="#111111" stroke-width="1.4" />
</svg>
<div style="position:absolute;left:0;top:0;width:1920px;height:1200px;will-change:transform;">
<div class="t" style="left:810.0px;top:14.0px;font-size:18px;color:#ececec;letter-spacing:-0.16px;">Footing with diagonal (AISC).ideaCon</div><div class="t" style="left:308.1px;top:51.0px;font-size:15.0px;color:#ffffff;letter-spacing:-0.34px;font-weight:bold;">Project</div><div class="t" style="left:439.1px;top:51.0px;font-size:15.0px;color:#ffffff;letter-spacing:-0.44px;font-weight:bold;">Design</div><div class="t" style="left:570.8px;top:51.8px;font-size:14.5px;color:#ffffff;letter-spacing:-0.58px;font-weight:bold;">Check</div><div class="t" style="left:697.3px;top:51.0px;font-size:15.0px;color:#ffffff;letter-spacing:-0.19px;font-weight:bold;">Report</div><div class="t" style="left:816.9px;top:50.8px;font-size:15.5px;color:#ffffff;letter-spacing:-0.24px;font-weight:bold;">Materials</div><div class="t" style="left:107.5px;top:9.2px;font-size:25.5px;color:#ffffff;letter-spacing:-0.06px;font-weight:bold;font-style:italic;">StatiCa</div><div class="t" style="left:197.0px;top:12.5px;font-size:9px;color:#ffffff;">®</div><div class="t" style="left:228.8px;top:12.0px;font-size:21.0px;color:#ffffff;letter-spacing:-0.44px;font-style:italic;">CONNECTION</div><div class="t" style="left:19.0px;top:43.8px;font-size:12.5px;color:#ffffff;letter-spacing:-0.16px;font-style:italic;">Calculate yesterday's estimates</div><div class="t" style="left:16.0px;top:98.0px;font-size:15px;color:#ffffff;letter-spacing:0.19px;">Footing with diagonal</div><div class="t" style="left:200.0px;top:134.0px;font-size:15px;color:#1e1e1e;">New</div><div class="t" style="left:244.0px;top:134.0px;font-size:15px;color:#1e1e1e;letter-spacing:-0.34px;">Copy</div><div class="t" style="left:100.0px;top:179.0px;font-size:15px;color:#f9b78f;letter-spacing:-0.18px;font-weight:bold;">Project items</div><div class="t" style="left:334.0px;top:110.0px;font-size:15px;color:#1e1e1e;letter-spacing:-0.29px;">Undo</div><div class="t" style="left:406.0px;top:111.0px;font-size:14.0px;color:#1e1e1e;letter-spacing:-0.30px;">Save</div><div class="t" style="left:334.0px;top:140.0px;font-size:15px;color:#c6c6c6;letter-spacing:-0.45px;">Redo</div><div class="t" style="left:355.5px;top:179.0px;font-size:15px;color:#b4b4b4;letter-spacing:-0.23px;">Data</div><div class="t" style="left:461.0px;top:134.0px;font-size:15px;color:#1e1e1e;letter-spacing:-0.11px;">Project</div><div class="t" style="left:459.0px;top:154.0px;font-size:15px;color:#1e1e1e;letter-spacing:-0.10px;">settings</div><div class="t" style="left:459.0px;top:179.0px;font-size:15px;color:#b4b4b4;letter-spacing:0.05px;">Options</div><div class="t" style="left:555.0px;top:95.0px;font-size:15px;color:#1e1e1e;letter-spacing:-0.09px;">Members</div><div class="t" style="left:555.0px;top:123.8px;font-size:14.5px;color:#1e1e1e;letter-spacing:-0.26px;">Plates</div><div class="t" style="left:555.0px;top:152.0px;font-size:14.0px;color:#1e1e1e;letter-spacing:-1.00px;">LCS</div><div class="t" style="left:553.0px;top:179.0px;font-size:15px;color:#b4b4b4;letter-spacing:-0.44px;">Labels</div><div class="t" style="left:666.0px;top:110.0px;font-size:15px;color:#1e1e1e;">New</div><div class="t" style="left:666.0px;top:140.0px;font-size:15px;color:#1e1e1e;letter-spacing:-0.25px;">Gallery</div><div class="t" style="left:649.0px;top:179.0px;font-size:15px;color:#b4b4b4;letter-spacing:-0.46px;">Pictures</div><div class="t" style="left:762.0px;top:110.0px;font-size:15px;color:#1e1e1e;letter-spacing:-0.48px;">Propose</div><div class="t" style="left:852.0px;top:110.0px;font-size:15px;color:#1e1e1e;letter-spacing:-0.04px;">Manage</div><div class="t" style="left:762.0px;top:140.0px;font-size:15px;color:#1e1e1e;letter-spacing:-0.37px;">Publish</div><div class="t" style="left:758.0px;top:179.0px;font-size:15px;color:#b4b4b4;letter-spacing:-0.11px;">Connection Library</div><div class="t" style="left:955.0px;top:97.0px;font-size:15px;color:#1e1e1e;letter-spacing:-0.23px;">Calculate</div><div class="t" style="left:949.3px;top:126.0px;font-size:15px;color:#1e1e1e;letter-spacing:-0.13px;">Weld sizing</div><div class="t" style="left:950.0px;top:153.0px;font-size:15px;color:#c6c6c6;letter-spacing:-0.21px;">Overall check</div><div class="t" style="left:959.0px;top:180.0px;font-size:14.0px;color:#b4b4b4;letter-spacing:-0.88px;">CBFEM</div><div class="t" style="left:1182.5px;top:96.0px;font-size:15px;color:#1e1e1e;letter-spacing:0.03px;">Connection Import</div><div class="t" style="left:1188.4px;top:125.8px;font-size:14.5px;color:#1e1e1e;letter-spacing:-0.28px;">XLS Export</div><div class="t" style="left:1080.4px;top:152.0px;font-size:15px;color:#1e1e1e;letter-spacing:-0.29px;">XLS Import</div><div class="t" style="left:1162.5px;top:179.8px;font-size:14.5px;color:#b4b4b4;letter-spacing:-0.30px;">Loads</div><div class="t" style="left:1338.4px;top:135.0px;font-size:14.0px;color:#1e1e1e;letter-spacing:-1.00px;">IFC</div><div class="t" style="left:1327.8px;top:179.0px;font-size:15px;color:#b4b4b4;letter-spacing:-0.29px;">Export</div><div class="t" style="left:1390.6px;top:134.0px;font-size:15px;color:#1e1e1e;letter-spacing:0.02px;">Member</div><div class="t" style="left:1454.7px;top:133.8px;font-size:14.5px;color:#1e1e1e;letter-spacing:-0.25px;">Load</div><div class="t" style="left:1495.4px;top:134.0px;font-size:15px;color:#1e1e1e;letter-spacing:0.05px;">Operation</div><div class="t" style="left:1461.6px;top:179.0px;font-size:15px;color:#b4b4b4;letter-spacing:-0.45px;">New</div><div class="t" style="left:984.2px;top:259.0px;font-size:15px;color:#f26f21;letter-spacing:-0.26px;font-weight:bold;">Production cost</div><div class="t" style="left:1102.0px;top:259.0px;font-size:15px;color:#333;">-</div><div class="t" style="left:1114.0px;top:259.8px;font-size:14.5px;color:#111;letter-spacing:-0.20px;font-weight:bold;">144 US$</div><div class="t" style="left:1159.2px;top:370.0px;font-size:15px;color:#3c3c3c;letter-spacing:0.04px;font-weight:bold;">Footing with diago...</div><div class="t" style="left:1184.5px;top:398.0px;font-size:15px;color:#3c3c3c;letter-spacing:-0.08px;font-weight:bold;">Members</div><div class="t" style="left:1184.5px;top:454.0px;font-size:15px;color:#3c3c3c;letter-spacing:-0.33px;font-weight:bold;">Load effects</div><div class="t" style="left:1184.5px;top:510.0px;font-size:15px;color:#3c3c3c;letter-spacing:-0.24px;font-weight:bold;">Operations</div><div class="t" style="left:1210.9px;top:430.0px;font-size:14.0px;color:#ffffff;letter-spacing:-0.69px;text-decoration:underline;">COL</div><div class="t" style="left:1211.7px;top:486.0px;font-size:14.0px;color:#4a4a4a;letter-spacing:-1.00px;">LE1</div><div class="t" style="left:1211.7px;top:541.0px;font-size:14.0px;color:#4a4a4a;letter-spacing:-1.00px;">BP1</div><div class="t" style="left:1350.9px;top:210.0px;font-size:14.0px;color:#ffffff;letter-spacing:-0.63px;font-weight:bold;">COL</div><div class="t" style="left:1814.0px;top:210.0px;font-size:14.0px;color:#ffffff;letter-spacing:-0.10px;font-weight:bold;">Copy</div><div class="t" style="left:1862.6px;top:209.0px;font-size:15px;color:#ffffff;letter-spacing:-0.16px;font-weight:bold;">Delete</div><div class="t" style="left:1382.2px;top:250.0px;font-size:15px;color:#333;font-weight:bold;">Properties</div><div class="t" style="left:1382.2px;top:281.0px;font-size:15px;color:#444444;">Cross-section</div><div class="t" style="left:1382.2px;top:312.0px;font-size:15px;color:#444444;letter-spacing:0.02px;">Mirror Y</div><div class="t" style="left:1382.2px;top:342.0px;font-size:15px;color:#444444;letter-spacing:0.10px;">Mirror Z</div><div class="t" style="left:1382.2px;top:372.0px;font-size:15px;color:#444444;letter-spacing:0.03px;">Geometrical type</div><div class="t" style="left:1519.6px;top:372.0px;font-size:15px;color:#1a1a1a;">Ended</div><div class="t" style="left:1382.2px;top:417.0px;font-size:15px;color:#333;letter-spacing:-0.41px;font-weight:bold;">Position</div><div class="t" style="left:1382.2px;top:448.0px;font-size:15px;color:#444444;letter-spacing:0.12px;">Defined by</div><div class="t" style="left:1519.6px;top:448.0px;font-size:15px;color:#1a1a1a;letter-spacing:-0.12px;">Rotations</div><div class="t" style="left:1382.2px;top:479.0px;font-size:15px;color:#444444;letter-spacing:0.05px;">β – Direction [°]</div><div class="t" style="left:1516.2px;top:481.0px;font-size:14.0px;color:#1a1a1a;letter-spacing:-0.33px;">0.0</div><div class="t" style="left:1382.2px;top:510.0px;font-size:15px;color:#444444;letter-spacing:0.01px;">γ - Pitch [°]</div><div class="t" style="left:1516.2px;top:512.0px;font-size:14.0px;color:#1a1a1a;letter-spacing:-0.25px;">90.0</div><div class="t" style="left:1382.2px;top:541.0px;font-size:15px;color:#444444;letter-spacing:0.18px;">α - Rotation [°]</div><div class="t" style="left:1516.2px;top:543.0px;font-size:14.0px;color:#1a1a1a;letter-spacing:-0.33px;">0.0</div><div class="t" style="left:1382.2px;top:572.0px;font-size:15px;color:#444444;">Offset ex [in]</div><div class="t" style="left:1516.2px;top:573.0px;font-size:15px;color:#1a1a1a;letter-spacing:0.22px;">-8"</div><div class="t" style="left:1382.2px;top:603.0px;font-size:15px;color:#444444;">Offset ey [in]</div><div class="t" style="left:1516.2px;top:604.8px;font-size:14.5px;color:#1a1a1a;letter-spacing:-0.41px;">0"</div><div class="t" style="left:1382.2px;top:634.0px;font-size:15px;color:#444444;">Offset ez [in]</div><div class="t" style="left:1516.2px;top:635.8px;font-size:14.5px;color:#1a1a1a;letter-spacing:-0.41px;">0"</div><div class="t" style="left:1382.2px;top:665.0px;font-size:15px;color:#444444;letter-spacing:0.36px;">Align</div><div class="t" style="left:1519.6px;top:665.0px;font-size:15px;color:#1a1a1a;letter-spacing:-0.14px;">In node</div><div class="t" style="left:1382.2px;top:710.0px;font-size:15px;color:#333;letter-spacing:0.09px;font-weight:bold;">Model</div><div class="t" style="left:1382.2px;top:741.0px;font-size:15px;color:#444444;letter-spacing:0.21px;">Model type</div><div class="t" style="left:1519.6px;top:741.0px;font-size:15px;color:#1a1a1a;letter-spacing:0.14px;">N-Vy-Vz-Mx-My-Mz</div><div class="t" style="left:1382.2px;top:772.8px;font-size:14.5px;color:#444444;letter-spacing:-0.27px;">Forces in</div><div class="t" style="left:1519.6px;top:772.0px;font-size:15px;color:#1a1a1a;letter-spacing:0.15px;">Node</div><div class="t" style="left:1383.2px;top:840.0px;font-size:15px;color:#4a4a4a;letter-spacing:-0.07px;">One member of the joint is considered as 'bearing'. The other ones are</div><div class="t" style="left:1383.2px;top:860.0px;font-size:15px;color:#4a4a4a;">'connected'. The support in analysis model is applied on the bearing member.</div><div class="t" style="left:30.0px;top:1173.0px;font-size:15px;color:#8e8e8e;letter-spacing:-0.47px;font-weight:bold;">Design code:</div><div class="t" style="left:125.0px;top:1173.0px;font-size:15px;color:#ffffff;letter-spacing:-0.10px;font-weight:bold;">AISC - LRFD (2022)</div><div class="t" style="left:286.0px;top:1173.8px;font-size:14.5px;color:#8e8e8e;letter-spacing:-0.43px;font-weight:bold;">Analysis:</div><div class="t" style="left:354.0px;top:1173.0px;font-size:15px;color:#ffffff;letter-spacing:-0.43px;font-weight:bold;">Stress, strain</div><div class="t" style="left:469.5px;top:1173.0px;font-size:15px;color:#8e8e8e;letter-spacing:-0.36px;font-weight:bold;">Load effects:</div><div class="t" style="left:565.0px;top:1173.0px;font-size:15px;color:#ffffff;letter-spacing:-0.06px;font-weight:bold;">In equilibrium</div><div class="t" style="left:688.5px;top:1173.0px;font-size:15px;color:#8e8e8e;letter-spacing:-0.40px;font-weight:bold;">Units:</div><div class="t" style="left:739.0px;top:1173.8px;font-size:14.5px;color:#ffffff;letter-spacing:-0.39px;font-weight:bold;">in</div><div class="t" style="left:1766px;top:1173.0px;font-size:15px;letter-spacing:-0.03px;color:#e8e8e8;"><span style="color:#f26f21">www.</span>ideastatica<span style="color:#f26f21">.com</span></div><div class="t" style="left:667.3px;top:252.0px;font-size:14px;color:#111;letter-spacing:0.07px;">-67.4</div><div class="t" style="left:683.0px;top:338.0px;font-size:13.0px;color:#111;letter-spacing:-0.41px;">-51.6</div><div class="t" style="left:658.3px;top:342.0px;font-size:13.0px;color:#111;letter-spacing:-0.19px;">5.9</div><div class="t" style="left:621.5px;top:485.0px;font-size:15.0px;color:#111;letter-spacing:-0.42px;">COL</div><div class="t" style="left:27.5px;top:9.2px;font-size:23.5px;font-weight:bold;font-style:italic;color:#f26f21;letter-spacing:0.5px;transform:scaleX(1.27);transform-origin:left center;">IDEA</div><div class="t" style="left:1067.2px;top:119.8px;font-size:9.5px;color:#f26f21;font-weight:bold;">%</div><div class="t" style="left:1057.6000000000001px;top:155.89999999999998px;font-size:10px;font-weight:bold;color:#111111;transform:scale(0.66,1.0);transform-origin:left top;">XLS</div><div class="t" style="left:1160.8000000000002px;top:128.7px;font-size:10px;font-weight:bold;color:#111111;transform:scale(0.66,1.0);transform-origin:left top;">XLS</div><div class="t" style="left:1334.8px;top:107.8px;font-size:16.5px;color:#111111;letter-spacing:-0.49px;">IFC</div><div class="t" style="left:1247.6px;top:315.8px;font-size:7.5px;color:#ffffff;font-weight:bold;">-Y</div>
<div class="r" style="left:1389px;top:205px;width:398px;height:92px;background:#fff;border:1px solid #bdbdbd;box-shadow:1px 1px 2px rgba(0,0,0,0.12);"></div><div class="t" style="left:1395.5px;top:214.0px;font-size:15px;color:#333;letter-spacing:-0.08px;font-weight:bold;">Add a new member</div><div class="t" style="left:1447.4px;top:241.0px;font-size:15px;color:#4a4a4a;letter-spacing:0.03px;">Add a new member into the joint. The member is</div><div class="t" style="left:1447.4px;top:261.0px;font-size:15px;color:#4a4a4a;letter-spacing:-0.19px;">set as current member.</div>
</div>
<svg width="1920" height="1200" viewBox="0 0 1920 1200"><g transform="translate(-4.4,153.8)">
<path d="M1399.3 102.5H1416.7L1438.5 113.3V128.3H1419.7L1399.3 115.9ZM1399.3 102.5L1419.7 113.9L1438.5 113.3M1419.7 113.9V128.3" fill="none" stroke="#111" stroke-width="1.4" stroke-linejoin="round"/>
<path d="M1425.4 95.8H1438.6M1432 89.2V102.4" fill="none" stroke="#f26f21" stroke-width="1.3"/></g></svg>
</body></html>
